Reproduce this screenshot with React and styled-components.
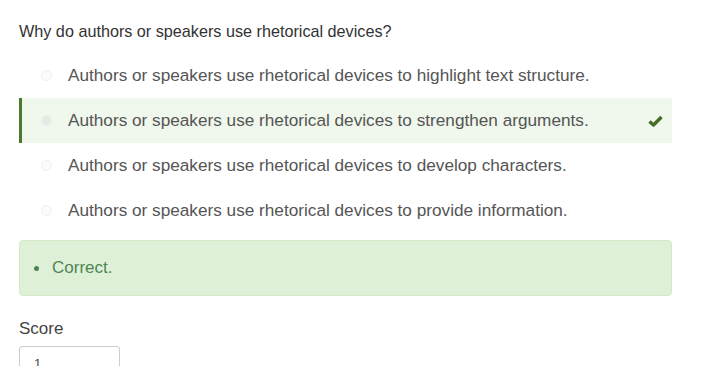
import styled, { createGlobalStyle } from "styled-components";

const GlobalStyle = createGlobalStyle`
  body {
    margin: 0;
    background: #ffffff;
    font-family: "Liberation Sans", Arial, sans-serif;
  }
`;

const Page = styled.div`
  width: 653px;
  padding: 20px 0 0 19px;
`;

const Question = styled.p`
  margin: 0 0 11px;
  font-size: 16.2px;
  line-height: 22px;
  color: #333;
`;

const Options = styled.div`
  display: flex;
  flex-direction: column;
`;

const Option = styled.div`
  display: flex;
  align-items: center;
  height: 45px;
  padding-left: 19px;
  padding-right: 9px;
  border-left: 3px solid ${(p) => (p.$selected ? "#4b7a2c" : "transparent")};
  background: ${(p) => (p.$selected ? "#f0f7ec" : "transparent")};
  color: #555;
  font-size: 17.2px;
`;

const Radio = styled.span`
  box-sizing: border-box;
  width: 11px;
  height: 11px;
  border-radius: 50%;
  border: 1px solid #efefef;
  background: ${(p) => (p.$selected ? "#e6eae4" : "#fbfbfb")};
  margin-right: 16px;
  flex-shrink: 0;
`;

const Label = styled.span`
  flex: 1;
`;

const Check = styled.svg`
  width: 15px;
  height: 12px;
`;

const Alert = styled.div`
  margin-top: 7px;
  height: 56px;
  box-sizing: border-box;
  display: flex;
  align-items: center;
  padding-left: 14px;
  background: #dff0d8;
  border: 1px solid #d6e9c6;
  border-radius: 4px;
  color: #4f8550;
  font-size: 17px;
`;

const Bullet = styled.span`
  width: 5px;
  height: 5px;
  border-radius: 50%;
  background: #4f8550;
  margin-right: 13px;
`;

const ScoreLabel = styled.div`
  margin-top: 23px;
  font-size: 17px;
  color: #444;
`;

const ScoreInput = styled.div`
  margin-top: 7px;
  width: 101px;
  height: 30px;
  box-sizing: border-box;
  border: 1px solid #ccc;
  border-radius: 3px;
  padding: 9px 0 0 14px;
  font-size: 13px;
  color: #444;
`;

const options = [
  "Authors or speakers use rhetorical devices to highlight text structure.",
  "Authors or speakers use rhetorical devices to strengthen arguments.",
  "Authors or speakers use rhetorical devices to develop characters.",
  "Authors or speakers use rhetorical devices to provide information.",
];

export default function App() {
  return (
    <Page>
      <GlobalStyle />
      <Question>Why do authors or speakers use rhetorical devices?</Question>
      <Options>
        {options.map((text, i) => (
          <Option key={text} $selected={i === 1}>
            <Radio $selected={i === 1} />
            <Label>{text}</Label>
            {i === 1 && (
              <Check viewBox="0 0 15 12">
                <path d="M1.5 6.5 L5.5 10 L13.5 2" fill="none" stroke="#466b26" strokeWidth="3.4" strokeLinejoin="round" />
              </Check>
            )}
          </Option>
        ))}
      </Options>
      <Alert>
        <Bullet />
        Correct.
      </Alert>
      <ScoreLabel>Score</ScoreLabel>
      <ScoreInput>1</ScoreInput>
    </Page>
  );
}
